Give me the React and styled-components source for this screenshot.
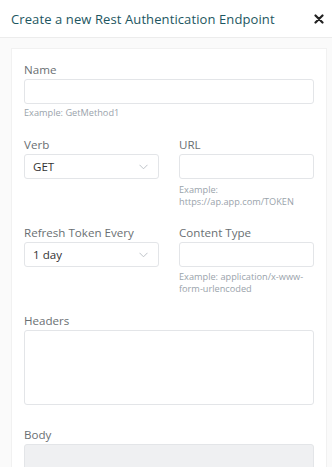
import React from "react";
import styled, { createGlobalStyle } from "styled-components";

const Global = createGlobalStyle`
  html, body { margin: 0; padding: 0; background: #ffffff; }
  body { font-family: "Open Sans", "Noto Sans", sans-serif; }
  * { box-sizing: border-box; }
`;

const Modal = styled.div`
  width: 332px;
  height: 467px;
  overflow: hidden;
  display: flex;
  flex-direction: column;
  background: #fff;
`;

const Header = styled.div`
  height: 38px;
  flex: none;
  display: flex;
  align-items: center;
  justify-content: space-between;
  padding: 0 7px 0 11px;
  border-bottom: 1px solid #ececec;
`;

const Title = styled.h1`
  margin: 0;
  font-family: "Open Sans", sans-serif;
  font-weight: 400;
  font-size: 13px;
  letter-spacing: 0.1px;
  color: #1d5661;
`;

const Close = styled.button`
  border: 0;
  background: none;
  padding: 0;
  width: 12px;
  height: 12px;
  display: flex;
  align-items: center;
  justify-content: center;
  cursor: pointer;
`;

const Body = styled.div`
  flex: 1;
  background: #fafafa;
  padding: 10px 5px 0 11px;
  display: flex;
`;

const Card = styled.div`
  flex: 1;
  background: #fff;
  border: 1px solid #f1f1f1;
  border-bottom: 0;
  padding: 13px 12px 0 12px;
  display: flex;
  flex-direction: column;
`;

const Row = styled.div`
  display: grid;
  grid-template-columns: 135px 135px;
  justify-content: space-between;
  margin-bottom: ${(p) => p.$mb || 0}px;
`;

const Field = styled.div`
  display: flex;
  flex-direction: column;
  margin-bottom: ${(p) => p.$mb || 0}px;
`;

const Label = styled.label`
  font-family: "Open Sans", sans-serif;
  font-size: 11.6px;
  color: #6a6f73;
  line-height: 16px;
  margin-bottom: 1px;
`;

const Input = styled.div`
  height: ${(p) => p.$h || 25}px;
  border: 1px solid #e3e5e8;
  border-radius: 3px;
  background: ${(p) => (p.$disabled ? "#eff0f2" : "#fff")};
`;

const Select = styled.div`
  height: 25px;
  border: 1px solid #e3e5e8;
  border-radius: 3px;
  background: #fff;
  display: flex;
  align-items: center;
  justify-content: space-between;
  padding: 0 10px 0 8px;
  font-family: "Open Sans", sans-serif;
  font-size: 11.6px;
  color: #333;
`;

const Hint = styled.div`
  font-family: "Open Sans", sans-serif;
  font-size: 9.2px;
  line-height: 12px;
  color: #9aa3ab;
  margin-top: ${(p) => p.$mt || 3}px;
`;

const Chevron = () => (
  <svg width="9" height="6" viewBox="0 0 9 6">
    <path d="M0.5 0.8 L4.5 4.8 L8.5 0.8" fill="none" stroke="#b7bcc2" strokeWidth="0.9" />
  </svg>
);

export default function App() {
  return (
    <>
      <Global />
      <Modal>
        <Header>
          <Title>Create a new Rest Authentication Endpoint</Title>
          <Close aria-label="close">
            <svg width="10" height="10" viewBox="0 0 10 10">
              <path d="M1.5 1.5 L8.5 8.5 M8.5 1.5 L1.5 8.5" stroke="#222" strokeWidth="2.2" strokeLinecap="round" />
            </svg>
          </Close>
        </Header>
        <Body>
          <Card>
            <Field $mb={18}>
              <Label>Name</Label>
              <Input />
              <Hint>Example: GetMethod1</Hint>
            </Field>
            <Row $mb={17}>
              <Field>
                <Label>Verb</Label>
                <Select>
                  GET
                  <Chevron />
                </Select>
              </Field>
              <Field>
                <Label>URL</Label>
                <Input />
                <Hint $mt={5}>
                  Example:
                  <br />
                  https://ap.app.com/TOKEN
                </Hint>
              </Field>
            </Row>
            <Row $mb={18}>
              <Field>
                <Label>Refresh Token Every</Label>
                <Select>
                  1 day
                  <Chevron />
                </Select>
              </Field>
              <Field>
                <Label>Content Type</Label>
                <Input />
                <Hint $mt={4}>
                  Example: application/x-www-
                  <br />
                  form-urlencoded
                </Hint>
              </Field>
            </Row>
            <Field $mb={22}>
              <Label>Headers</Label>
              <Input $h={75} />
            </Field>
            <Field>
              <Label>Body</Label>
              <Input $h={40} $disabled />
            </Field>
          </Card>
        </Body>
      </Modal>
    </>
  );
}
